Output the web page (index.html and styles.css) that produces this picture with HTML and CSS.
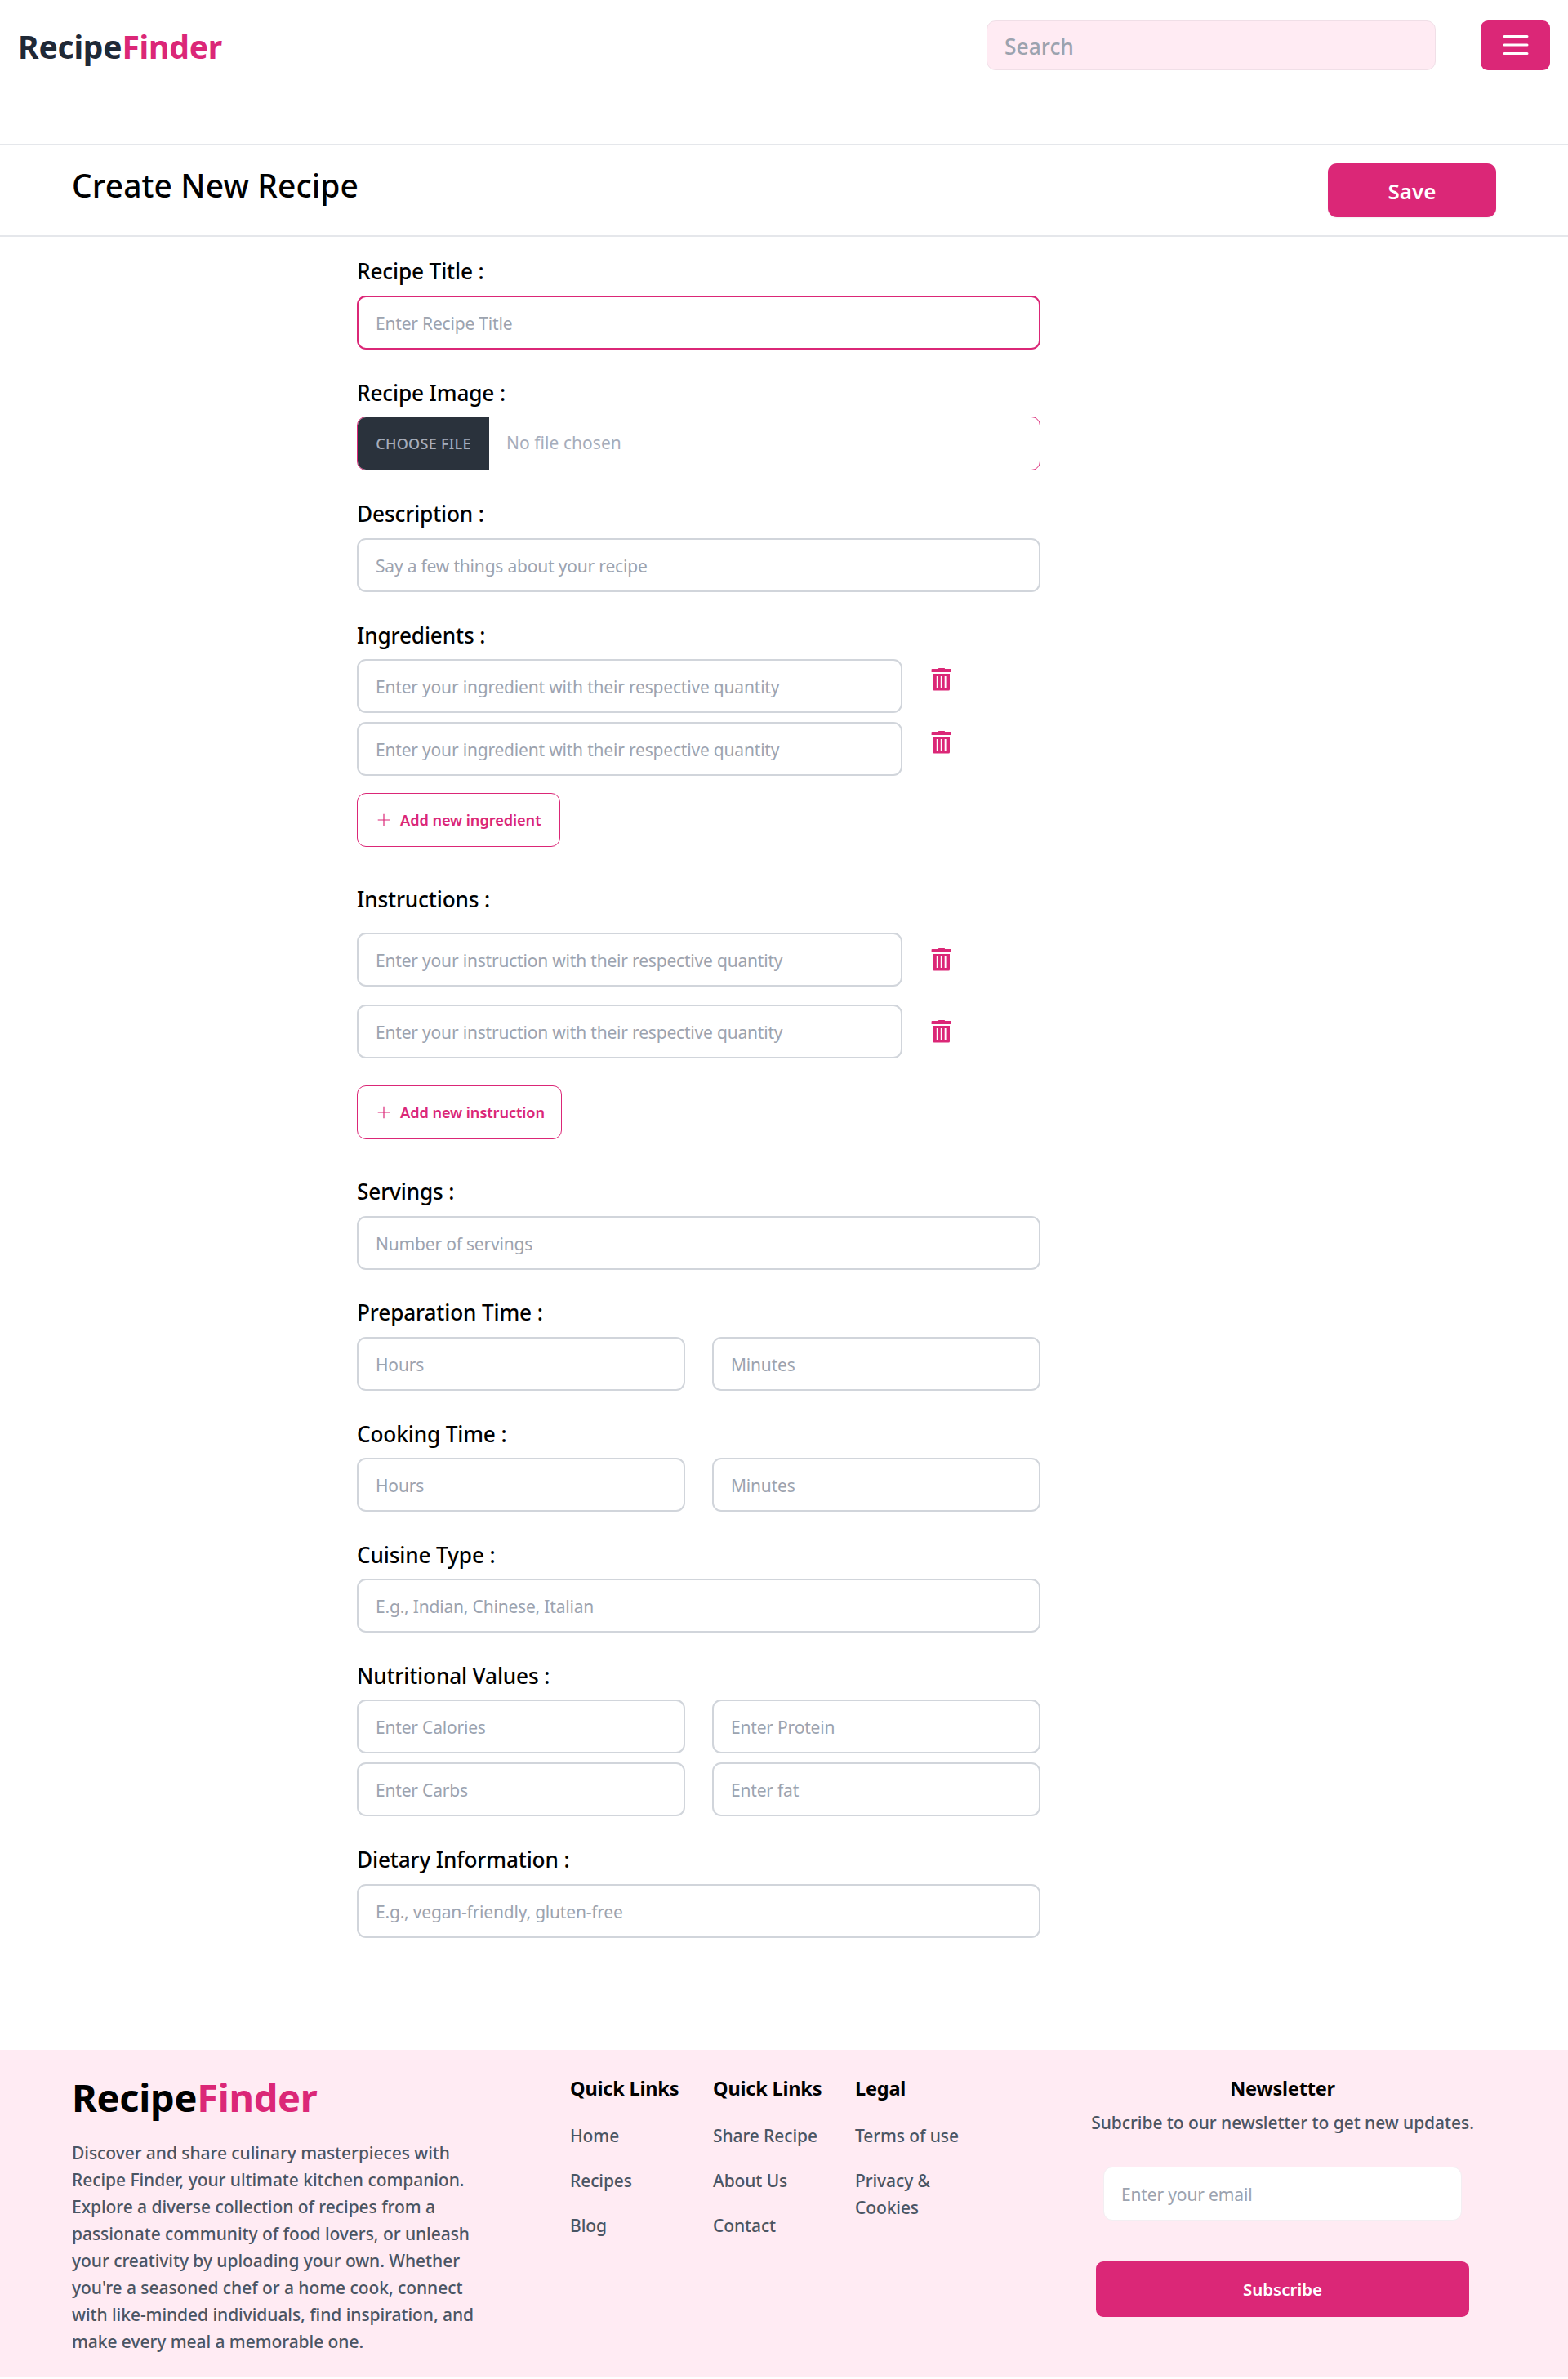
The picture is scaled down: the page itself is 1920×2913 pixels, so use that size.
FILE: index.html
```
<!DOCTYPE html>
<html lang="en">
<head>
<meta charset="utf-8">
<title>RecipeFinder - Create New Recipe</title>
<link rel="stylesheet" href="styles.css">
</head>
<body>
<svg class="sprite" width="0" height="0" aria-hidden="true">
  <symbol id="trash" viewBox="0 0 26 28">
    <path fill-rule="evenodd" d="M9 1V.6Q9 0 9.6 0H16.4Q17 0 17 .6V1H24Q24.8 1 24.8 1.8V5H.6V1.8Q.6 1 1.4 1ZM2.4 7H23V26Q23 27.5 21.5 27.5H4Q2.4 27.5 2.4 26ZM6.8 10V24H8.7V10ZM11.8 10V24H13.7V10ZM16.7 10V24H18.6V10Z"/>
  </symbol>
  <symbol id="plus" viewBox="0 0 16 16">
    <path d="M8 .7V15.3M.7 8H15.3" fill="none" stroke="currentColor" stroke-width="1.2"/>
  </symbol>
</svg>

<header class="header">
  <a class="logo">Recipe<span class="accent">Finder</span></a>
  <div class="header-tools">
    <input class="search" type="text" placeholder="Search">
    <button class="menu" type="button" aria-label="Menu">
      <svg width="34" height="28" viewBox="0 0 34 28"><path d="M3 3.5H31M3 14H31M3 24.5H31" fill="none" stroke="#fff" stroke-width="3" stroke-linecap="round"/></svg>
    </button>
  </div>
</header>

<div class="titlebar">
  <h1 class="title">Create New Recipe</h1>
  <button class="save" type="button">Save</button>
</div>

<form class="form">
  <div class="field">
    <label class="label">Recipe Title :</label>
    <input class="input active" type="text" placeholder="Enter Recipe Title">
  </div>
  <div class="field">
    <label class="label">Recipe Image :</label>
    <div class="file"><span class="file-button">CHOOSE FILE</span><span class="file-name">No file chosen</span></div>
  </div>
  <div class="field">
    <label class="label">Description :</label>
    <input class="input" type="text" placeholder="Say a few things about your recipe">
  </div>
  <div class="field">
    <label class="label">Ingredients :</label>
    <div class="rows">
      <div class="row"><input class="input" type="text" placeholder="Enter your ingredient with their respective quantity"><svg class="trash"><use href="#trash"/></svg></div>
      <div class="row"><input class="input" type="text" placeholder="Enter your ingredient with their respective quantity"><svg class="trash"><use href="#trash"/></svg></div>
    </div>
    <button class="add" type="button"><svg class="plus"><use href="#plus"/></svg>Add new ingredient</button>
  </div>
  <div class="field instructions">
    <label class="label">Instructions :</label>
    <div class="rows">
      <div class="row"><input class="input" type="text" placeholder="Enter your instruction with their respective quantity"><svg class="trash"><use href="#trash"/></svg></div>
      <div class="row"><input class="input" type="text" placeholder="Enter your instruction with their respective quantity"><svg class="trash"><use href="#trash"/></svg></div>
    </div>
    <button class="add add-wide" type="button"><svg class="plus"><use href="#plus"/></svg>Add new instruction</button>
  </div>
  <div class="field servings">
    <label class="label">Servings :</label>
    <input class="input" type="text" placeholder="Number of servings">
  </div>
  <div class="field">
    <label class="label">Preparation Time :</label>
    <div class="pair">
      <input class="input" type="text" placeholder="Hours">
      <input class="input" type="text" placeholder="Minutes">
    </div>
  </div>
  <div class="field">
    <label class="label">Cooking Time :</label>
    <div class="pair">
      <input class="input" type="text" placeholder="Hours">
      <input class="input" type="text" placeholder="Minutes">
    </div>
  </div>
  <div class="field">
    <label class="label">Cuisine Type :</label>
    <input class="input" type="text" placeholder="E.g., Indian, Chinese, Italian">
  </div>
  <div class="field">
    <label class="label">Nutritional Values :</label>
    <div class="pair">
      <input class="input" type="text" placeholder="Enter Calories">
      <input class="input" type="text" placeholder="Enter Protein">
      <input class="input" type="text" placeholder="Enter Carbs">
      <input class="input" type="text" placeholder="Enter fat">
    </div>
  </div>
  <div class="field">
    <label class="label">Dietary Information :</label>
    <input class="input" type="text" placeholder="E.g., vegan-friendly, gluten-free">
  </div>
</form>

<footer class="footer">
  <div>
    <div class="footer-logo">Recipe<span class="accent">Finder</span></div>
    <p class="about">Discover and share culinary masterpieces with Recipe Finder, your ultimate kitchen companion. Explore a diverse collection of recipes from a passionate community of food lovers, or unleash your creativity by uploading your own. Whether you're a seasoned chef or a home cook, connect with like-minded individuals, find inspiration, and make every meal a memorable one.</p>
  </div>
  <div>
    <h2 class="footer-heading">Quick Links</h2>
    <ul class="links"><li>Home</li><li>Recipes</li><li>Blog</li></ul>
  </div>
  <div>
    <h2 class="footer-heading">Quick Links</h2>
    <ul class="links"><li>Share Recipe</li><li>About Us</li><li>Contact</li></ul>
  </div>
  <div>
    <h2 class="footer-heading">Legal</h2>
    <ul class="links"><li>Terms of use</li><li>Privacy &amp; Cookies</li></ul>
  </div>
  <div class="newsletter">
    <h2 class="footer-heading">Newsletter</h2>
    <p class="newsletter-text">Subcribe to our newsletter to get new updates.</p>
    <input class="input email" type="text" placeholder="Enter your email">
    <button class="subscribe" type="button">Subscribe</button>
  </div>
</footer>
</body>
</html>
```
FILE: styles.css
```
* { box-sizing: border-box; }

body {
  margin: 0;
  height: 2913px;
  background: #fff;
  color: #000;
  font-family: "Noto Sans", "Open Sans", sans-serif;
}

h1, h2, p, ul { margin: 0; padding: 0; }
input, button { font-family: inherit; margin: 0; outline: none; }
.sprite { display: block; }
.accent { color: #db2777; }

/* Header */
.header {
  display: flex;
  justify-content: space-between;
  align-items: flex-start;
  height: 176px;
  padding: 25px 22px 0 22px;
}
.logo {
  margin-top: 10px;
  color: #1f2937;
  font-size: 39px;
  font-weight: 700;
  line-height: 44px;
  letter-spacing: -0.2px;
}
.header-tools { display: flex; gap: 55px; }
.search {
  width: 550px;
  height: 61px;
  padding: 2px 21px 0;
  border: 1px solid #f0dfe7;
  border-radius: 11px;
  background: #ffebf3;
  font-size: 26.4px;
  font-weight: 500;
}
.search::placeholder, .input::placeholder { color: #9ca3af; opacity: 1; }
.menu {
  display: flex;
  justify-content: center;
  width: 85px;
  height: 61px;
  padding: 15.5px 0 0;
  border: 0;
  border-radius: 9px;
  background: #db2777;
}

/* Page title */
.titlebar {
  display: flex;
  justify-content: space-between;
  align-items: flex-start;
  height: 114px;
  padding: 22px 88px 0 87px;
  border-top: 2px solid #e5e7eb;
  border-bottom: 2px solid #e5e7eb;
}
.title {
  margin-top: 5px;
  padding-left: 1px;
  font-size: 39px;
  font-weight: 500;
  line-height: 44px;
  letter-spacing: 0.1px;
}
.save {
  width: 206px;
  height: 66px;
  padding: 1px 0 0;
  border: 0;
  border-radius: 11px;
  background: #db2777;
  box-shadow: 0 1px 2px rgba(0, 0, 0, 0.06);
  color: #fff;
  font-size: 26px;
  font-weight: 600;
}

/* Form */
.form {
  width: 837px;
  height: 2220px;
  margin-left: 437px;
  padding-top: 24.3px;
}
.field + .field { margin-top: 35px; }
.label {
  display: block;
  height: 36px;
  margin-bottom: 11.5px;
  font-size: 26.2px;
  font-weight: 500;
  line-height: 36px;
  letter-spacing: -0.14px;
}
.input {
  display: block;
  width: 100%;
  height: 66px;
  padding: 2px 21px 0;
  border: 2px solid #d1d5db;
  border-radius: 11px;
  background: #fff;
  font-size: 21px;
  letter-spacing: -0.19px;
}
.input.active { border-color: #db2777; }

.file {
  display: flex;
  height: 66px;
  border: 1px solid #db2777;
  border-radius: 11px;
  overflow: hidden;
  line-height: 64px;
  color: #a6adbb;
}
.file-button {
  width: 161px;
  background: #2a323c;
  font-size: 18px;
  font-weight: 500;
  letter-spacing: 0.3px;
  text-align: center;
}
.file-name {
  padding-left: 21px;
  font-size: 21px;
  line-height: 62px;
  letter-spacing: 0.05px;
}

.rows { display: flex; flex-direction: column; gap: 11px; }
.row { display: flex; gap: 35px; }
.row .input { width: 668px; }
.trash { width: 26px; height: 28px; margin-top: 11px; fill: #db2777; }
.add {
  display: flex;
  align-items: center;
  width: 249px;
  height: 66px;
  margin-top: 20.7px;
  padding: 0 0 0 24px;
  border: 1px solid #db2777;
  border-radius: 11px;
  background: #fff;
  color: #db2777;
  font-size: 18.2px;
  font-weight: 600;
  letter-spacing: -0.08px;
  white-space: nowrap;
}
.add-wide { width: 251px; }
.plus { width: 16px; height: 16px; margin-right: 12px; }

.field.instructions { margin-top: 46px; }
.instructions .rows { gap: 22px; padding-top: 11.5px; }
.instructions .trash { margin-top: 19px; }
.instructions .add { margin-top: 33px; }
.field.servings { margin-top: 46.2px; }
.servings ~ .field { margin-top: 34.7px; }

.pair { display: grid; grid-template-columns: 1fr 1fr; gap: 11px 33px; }

/* Footer */
.footer {
  display: grid;
  grid-template-columns: 610px 175px 174px 261px 525px;
  height: 400px;
  padding: 30px 87px 0 88px;
  background: #ffebf3;
}
.footer-logo {
  font-size: 47px;
  font-weight: 700;
  line-height: 56px;
  letter-spacing: -0.3px;
}
.about {
  width: 504px;
  margin-top: 24px;
  color: #4b5563;
  font-size: 21px;
  font-weight: 500;
  line-height: 33px;
  letter-spacing: -0.06px;
}
.footer-heading {
  height: 34px;
  font-size: 23.5px;
  font-weight: 700;
  line-height: 34px;
  letter-spacing: -0.2px;
}
.links {
  display: flex;
  flex-direction: column;
  gap: 22px;
  width: 135px;
  margin-top: 25px;
  list-style: none;
  color: #4b5563;
  font-size: 21px;
  font-weight: 500;
  line-height: 33px;
  letter-spacing: -0.1px;
}
.newsletter { display: flex; flex-direction: column; align-items: center; }
.newsletter-text {
  margin-top: 9px;
  color: #4b5563;
  font-size: 21px;
  font-weight: 500;
  line-height: 33px;
  letter-spacing: -0.06px;
}
.email {
  width: 439px;
  margin-top: 37px;
  border: 1px solid #f3eef2;
  letter-spacing: -0.15px;
}
.subscribe {
  width: 457px;
  height: 68px;
  margin-top: 49.5px;
  border: 0;
  border-radius: 9px;
  background: #db2777;
  color: #fff;
  font-size: 20.5px;
  font-weight: 600;
}
```
